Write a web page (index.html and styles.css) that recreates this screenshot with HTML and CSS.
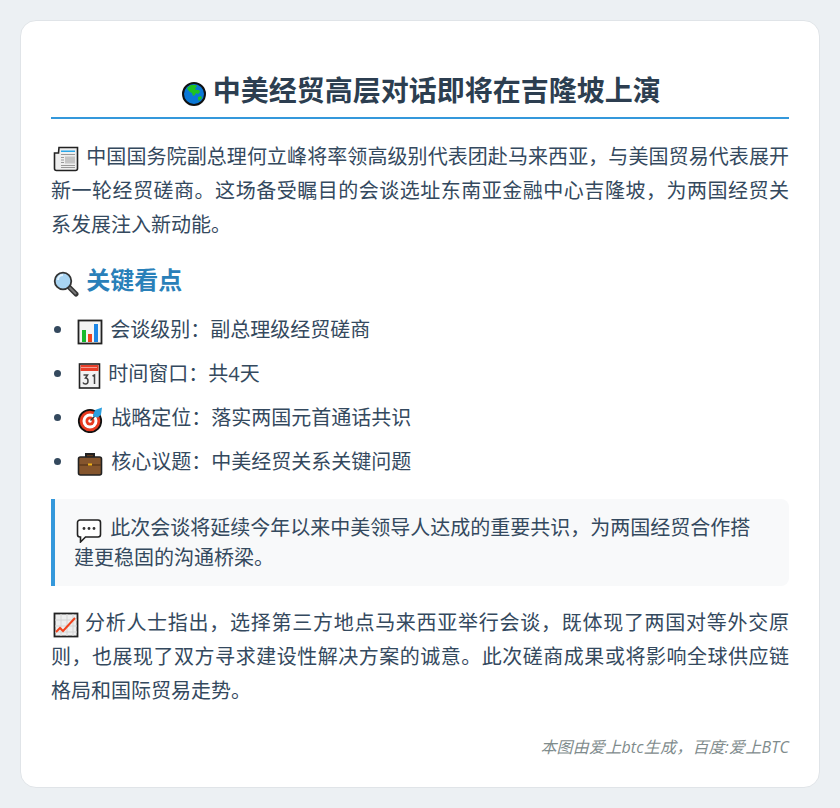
FILE: index.html
```
<!DOCTYPE html>
<html lang="zh">
<head>
<meta charset="utf-8">
<title>中美经贸高层对话即将在吉隆坡上演</title>
<link rel="stylesheet" href="styles.css">
</head>
<body>
<main class="card">
<h1 class="title"><svg class="emoji emoji-globe" viewBox="0 0 24 24"><circle cx="12" cy="12" r="11" fill="#0b78d6" stroke="#111" stroke-width="2"/><path d="M5 6l4-3 5 0 1 2-2 1 1 2 3 0 1 2-2 2-2-1-1 2-2 1-1-3-2-1-2-2z" fill="#1fc31f"/><path d="M16 15l3-1 1 2-3 3-1-2z" fill="#1fc31f"/></svg> 中美经贸高层对话即将在吉隆坡上演</h1>
<p class="para"><svg class="emoji" viewBox="0 0 26 26"><path d="M6 1.500h18.500v21a2 2 0 0 1-2 2H3.500a2 2 0 0 1-2-2V7h4z" fill="#eee" stroke="#222" stroke-width="1.600"/><path d="M8 4.500h14v1.500H8z" fill="#2aa7e8"/><path d="M8 8h14v1H8zM8 19h14v1H8zM8 21h14v1H8z" fill="#999"/><path d="M12 10.500h10v7H12z" fill="#c4c4c4"/><path d="M8 11h3v1H8zM8 13.500h3v1H8zM8 16h3v1H8z" fill="#999"/></svg> 中国国务院副总理何立峰将率领高级别代表团赴马来西亚，与美国贸易代表展开新一轮经贸磋商。这场备受瞩目的会谈选址东南亚金融中心吉隆坡，为两国经贸关系发展注入新动能。</p>
<h2 class="heading"><svg class="emoji emoji-tight" viewBox="0 0 26 26"><path d="M15 15l8 8" stroke="#333" stroke-width="5" stroke-linecap="round"/><path d="M16 16l6.500 6.500" stroke="#777" stroke-width="2" stroke-linecap="round"/><circle cx="10" cy="10" r="8.300" fill="#a8d4f2" stroke="#333" stroke-width="1.800"/><path d="M5 9a5 5 0 0 1 5-5" stroke="#e3f3ff" stroke-width="2" fill="none"/></svg> 关键看点</h2>
<ul class="points">
<li><svg class="emoji" viewBox="0 0 26 26"><rect x="1.500" y="1.500" width="23" height="23" fill="#f4f4f4" stroke="#222" stroke-width="1.800"/><path d="M5 11h4v12H5z" fill="#16b92d"/><path d="M11 15h4v8h-4z" fill="#f1421c"/><path d="M17 5h4v18h-4z" fill="#1b86e6"/></svg> 会谈级别：副总理级经贸磋商</li>
<li><svg class="emoji emoji-cal" viewBox="0 0 22 26"><rect x="1" y="1" width="20" height="24" fill="#f2f2f2" stroke="#222" stroke-width="1.600"/><path d="M2 2h18v6H2z" fill="#e8402a"/><path d="M3 4.500h16" stroke="#fff" stroke-width="1" stroke-dasharray="1 1"/><path d="M5 12h4l-2 3q2.500 0 2.500 3t-2.500 3q-2 0-2.500-1.500M14 13l2-1v9" fill="none" stroke="#444" stroke-width="1.500"/></svg> 时间窗口：共4天</li>
<li><svg class="emoji emoji-wide" viewBox="0 0 26 26"><circle cx="13" cy="14" r="11.200" fill="#e8391f" stroke="#111" stroke-width="1.800"/><circle cx="13" cy="14" r="7.500" fill="#fff"/><circle cx="13" cy="14" r="4.500" fill="#e8391f"/><circle cx="13" cy="14" r="1.800" fill="#fff"/><path d="M13.500 13.500L20 7" stroke="#333" stroke-width="1.200"/><path d="M16 8l2-5 7-2.500-1 7-3 3-5-1z" fill="#2b9fe0"/></svg> 战略定位：落实两国元首通话共识</li>
<li><svg class="emoji emoji-wide" viewBox="0 0 26 26"><path d="M9 6V3h8v3" fill="#5e3a1c" stroke="#222" stroke-width="2"/><rect x="1.500" y="6" width="23" height="18" rx="2" fill="#85552d" stroke="#222" stroke-width="1.600"/><path d="M2 14h22" stroke="#5e3a1c" stroke-width="1.500"/><rect x="11" y="12.500" width="4" height="2" fill="#f2b418"/></svg> 核心议题：中美经贸关系关键问题</li>
</ul>
<blockquote class="callout"><svg class="emoji emoji-shift" viewBox="0 0 26 26"><path d="M4 3h18a2.500 2.500 0 0 1 2.500 2.500v12A2.500 2.500 0 0 1 22 20H9.500L4.500 25v-5H4a2.500 2.500 0 0 1-2.500-2.500v-12A2.500 2.500 0 0 1 4 3z" fill="#fff" stroke="#222" stroke-width="1.600"/><circle cx="8" cy="11.500" r="1.400" fill="#333"/><circle cx="13" cy="11.500" r="1.400" fill="#333"/><circle cx="18" cy="11.500" r="1.400" fill="#333"/></svg> 此次会谈将延续今年以来中美领导人达成的重要共识，为两国经贸合作搭建更稳固的沟通桥梁。</blockquote>
<p class="para"><svg class="emoji emoji-chart" viewBox="0 0 26 26"><rect x="1.500" y="1.500" width="23" height="23" fill="#eee" stroke="#222" stroke-width="1.800"/><path d="M2 8h22M2 14h22M2 20h22M8 2v22M14 2v22M20 2v22" stroke="#d4d4d4"/><path d="M3 20l4-4 3 3 12-13" fill="none" stroke="#f1421c" stroke-width="2"/></svg> 分析人士指出，选择第三方地点马来西亚举行会谈，既体现了两国对等外交原则，也展现了双方寻求建设性解决方案的诚意。此次磋商成果或将影响全球供应链格局和国际贸易走势。</p>
<footer class="credit">本图由爱上btc生成，百度:爱上BTC</footer>
</main>
</body>
</html>
```
FILE: styles.css
```
* { box-sizing: border-box; }
html, body { margin: 0; }
body {
  background: #ecf0f3;
  padding: 20px;
  font-family: "Open Sans", "Noto Sans CJK SC", sans-serif;
  color: #34495e;
  font-size: 20px;
  line-height: 34px;
}
.card {
  height: 768px;
  background: #fff;
  border: 1px solid #e0e4e8;
  border-radius: 16px;
  padding: 48px 30px 0;
}
.emoji { width: 26px; height: 26px; margin: 0 2px; vertical-align: -8px; }
.emoji-globe { width: 24px; height: 24px; margin: 0 -1px 0 3px; vertical-align: -5px; }
.emoji-cal { width: 23px; margin-left: 3px; margin-right: 2px; }
.emoji-wide { margin-right: 3px; }
.emoji-tight { margin-right: 1px; }
.emoji-shift { margin-right: 3px; }
.emoji-chart { margin-right: 0; }
.title {
  margin: 0 0 21px;
  height: 50px;
  border-bottom: 2px solid #3498db;
  font-size: 28px;
  line-height: 42px;
  font-weight: 700;
  color: #2c3e50;
  text-align: center;
}
.para { margin: 0; text-align: justify; }
.heading {
  margin: 21px 0 16px;
  font-size: 24px;
  line-height: 34px;
  font-weight: 700;
  color: #2980b9;
}
.points { margin: 0; padding: 0 0 0 24px; }
.points li { height: 34px; margin-bottom: 10px; }
.callout {
  margin: 20px 0;
  padding: 14px 20px 13px 19px;
  background: #f8f9fa;
  border-left: 4px solid #3498db;
  border-radius: 0 8px 8px 0;
  line-height: 30px;
}
.credit {
  margin-top: 26px;
  font-size: 16px;
  line-height: 26px;
  font-style: italic;
  letter-spacing: 0.2px;
  color: #7f8c8d;
  text-align: right;
}
```
